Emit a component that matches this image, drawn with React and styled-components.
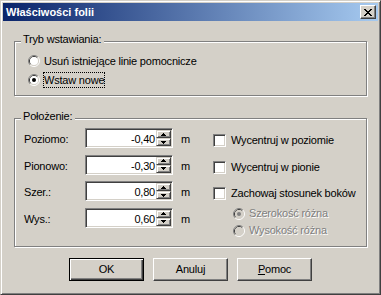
import React from 'react';
import styled, { createGlobalStyle } from 'styled-components';

const GlobalStyle = createGlobalStyle`
  html, body { margin: 0; padding: 0; background: #D4D0C8; }
  body { font-family: "Liberation Sans", Arial, sans-serif; font-size: 11px; letter-spacing: -0.2px; color: #000; }
  * { box-sizing: border-box; }
`;

const Window = styled.div`
  width: 381px;
  height: 295px;
  background: #D4D0C8;
  border: 1px solid;
  border-color: #D4D0C8 #404040 #404040 #D4D0C8;
  box-shadow: inset 1px 1px 0 #fff, inset -1px -1px 0 #808080;
  padding: 2px;
  display: flex;
  flex-direction: column;
`;

const TitleBar = styled.div`
  height: 18px;
  flex: none;
  display: flex;
  align-items: center;
  justify-content: space-between;
  padding: 0 2px 0 3px;
  background: linear-gradient(to right, #0A246A, #A6CAF0);
  color: #fff;
  font-weight: bold;
  font-size: 11px;
  letter-spacing: 0;
`;

const CloseButton = styled.div`
  width: 16px;
  height: 14px;
  display: flex;
  align-items: center;
  justify-content: center;
  background: #D4D0C8;
  border: 1px solid;
  border-color: #fff #404040 #404040 #fff;
  box-shadow: inset -1px -1px 0 #808080;
`;

const Body = styled.div`
  flex: 1;
  display: flex;
  flex-direction: column;
  padding: 20px 11px 0;
`;

const GroupBox = styled.div`
  position: relative;
  height: ${p => p.$h}px;
  margin-top: ${p => p.$mt || 0}px;
  padding: ${p => p.$pad};
  border: 1px solid #808080;
  box-shadow: 1px 1px 0 #fff, inset 1px 1px 0 #fff;
  display: flex;
  flex-direction: ${p => p.$dir || 'column'};
`;

const Legend = styled.span`
  position: absolute;
  top: -9px;
  left: 6px;
  line-height: 13px;
  padding: 0 3px 0 2px;
  background: #D4D0C8;
`;

const RadioList = styled.div`
  display: flex;
  flex-direction: column;
  gap: ${p => p.$gap}px;
  padding-left: ${p => p.$indent || 0}px;
  margin-top: ${p => p.$mt || 0}px;
`;

const OptionRow = styled.div`
  display: flex;
  align-items: center;
  height: ${p => p.$h}px;
  gap: ${p => p.$gap}px;
  white-space: nowrap;
`;

const OptionText = styled.span`
  line-height: ${p => (p.$focus ? 14 : 13)}px;
  border: ${p => (p.$focus ? '1px dotted #000' : 'none')};
  color: ${p => (p.$disabled ? '#808080' : '#000')};
  text-shadow: ${p => (p.$disabled ? '1px 1px 0 #fff' : 'none')};
`;

const CheckBox = styled.span`
  width: 13px;
  height: 13px;
  flex: none;
  background: #fff;
  border: 1px solid;
  border-color: #808080 #fff #fff #808080;
  box-shadow: inset 1px 1px 0 #404040, inset -1px -1px 0 #D4D0C8;
`;

const FieldGrid = styled.div`
  width: 189px;
  display: grid;
  grid-template-columns: 61px 88px 1fr;
  grid-auto-rows: 20px;
  row-gap: 6.5px;
  align-self: flex-start;
`;

const FieldLabel = styled.span`
  line-height: 13px;
  padding-top: 5px;
`;

const Unit = styled.span`
  line-height: 13px;
  padding-top: 5px;
  padding-left: 8px;
`;

const Field = styled.div`
  display: flex;
  height: 20px;
  background: #fff;
  border: 1px solid;
  border-color: #808080 #fff #fff #808080;
  box-shadow: inset 1px 1px 0 #404040, inset -1px -1px 0 #D4D0C8;
  padding: 1px;
`;

const FieldValue = styled.span`
  flex: 1;
  text-align: right;
  line-height: 13px;
  padding: 3px 1px 0 0;
`;

const Spinner = styled.div`
  width: 15px;
  display: flex;
  flex-direction: column;
`;

const SpinButton = styled.div`
  flex: 1;
  display: flex;
  align-items: center;
  justify-content: center;
  background: #D4D0C8;
  border: 1px solid;
  border-color: #D4D0C8 #404040 #404040 #D4D0C8;
  box-shadow: inset 1px 1px 0 #fff, inset -1px -1px 0 #808080;
`;

const RightColumn = styled.div`
  display: flex;
  flex-direction: column;
  padding-top: 6px;
`;

const CheckList = styled.div`
  display: flex;
  flex-direction: column;
  gap: 13.5px;
`;

const ButtonRow = styled.div`
  display: flex;
  justify-content: center;
  gap: 9px;
  margin-top: 11px;
`;

const PushButton = styled.div`
  width: 75px;
  height: 23px;
  display: flex;
  align-items: center;
  justify-content: center;
  background: #D4D0C8;
  border: 1px solid;
  border-color: ${p => (p.$default ? '#000' : '#fff #404040 #404040 #fff')};
  box-shadow: ${p =>
    p.$default
      ? 'inset 1px 1px 0 #fff, inset -1px -1px 0 #404040, inset -2px -2px 0 #808080'
      : 'inset -1px -1px 0 #808080'};
  line-height: 13px;
`;

const CloseIcon = () => (
  <svg width="8" height="7" viewBox="0 0 8 7" shapeRendering="crispEdges">
    <rect x="0" y="0" width="2" height="1" />
    <rect x="6" y="0" width="2" height="1" />
    <rect x="1" y="1" width="2" height="1" />
    <rect x="5" y="1" width="2" height="1" />
    <rect x="2" y="2" width="4" height="1" />
    <rect x="3" y="3" width="2" height="1" />
    <rect x="2" y="4" width="4" height="1" />
    <rect x="1" y="5" width="2" height="1" />
    <rect x="5" y="5" width="2" height="1" />
    <rect x="0" y="6" width="2" height="1" />
    <rect x="6" y="6" width="2" height="1" />
  </svg>
);

const RadioIcon = ({ checked, disabled }) => (
  <svg width="12" height="12" viewBox="0 0 12 12" style={{ flex: 'none' }}>
    <path d="M2.11 9.89 A5.5 5.5 0 0 1 9.89 2.11" stroke="#808080" fill="none" />
    <path d="M9.89 2.11 A5.5 5.5 0 0 1 2.11 9.89" stroke="#fff" fill="none" />
    <path d="M2.82 9.18 A4.5 4.5 0 0 1 9.18 2.82" stroke="#404040" fill="none" />
    <path d="M9.18 2.82 A4.5 4.5 0 0 1 2.82 9.18" stroke="#D4D0C8" fill="none" />
    <circle cx="6" cy="6" r="4" fill={disabled ? '#D4D0C8' : '#fff'} />
    {checked && <circle cx="6" cy="6" r="2" fill={disabled ? '#808080' : '#000'} />}
  </svg>
);

const Arrow = ({ down }) => (
  <svg width="5" height="3" viewBox="0 0 5 3" shapeRendering="crispEdges">
    {down ? (
      <>
        <rect x="0" y="0" width="5" height="1" />
        <rect x="1" y="1" width="3" height="1" />
        <rect x="2" y="2" width="1" height="1" />
      </>
    ) : (
      <>
        <rect x="2" y="0" width="1" height="1" />
        <rect x="1" y="1" width="3" height="1" />
        <rect x="0" y="2" width="5" height="1" />
      </>
    )}
  </svg>
);

const fields = [
  { label: 'Poziomo:', value: '-0,40' },
  { label: 'Pionowo:', value: '-0,30' },
  { label: 'Szer.:', value: '0,80' },
  { label: 'Wys.:', value: '0,60' },
];

const checks = ['Wycentruj w poziomie', 'Wycentruj w pionie', 'Zachowaj stosunek boków'];

export default function App() {
  return (
    <>
      <GlobalStyle />
      <Window>
        <TitleBar>
          <span>Właściwości folii</span>
          <CloseButton>
            <CloseIcon />
          </CloseButton>
        </TitleBar>
        <Body>
          <GroupBox $h={55} $pad="11px 0 0 13px">
            <Legend>Tryb wstawiania:</Legend>
            <RadioList $gap={3}>
              <OptionRow $h={16} $gap={4}>
                <RadioIcon />
                <OptionText>Usuń istniejące linie pomocnicze</OptionText>
              </OptionRow>
              <OptionRow $h={16} $gap={3}>
                <RadioIcon checked />
                <OptionText $focus>Wstaw nowe</OptionText>
              </OptionRow>
            </RadioList>
          </GroupBox>

          <GroupBox $h={129} $mt={22} $pad="9px 0 0 9px" $dir="row">
            <Legend>Położenie:</Legend>
            <FieldGrid>
              {fields.map(f => (
                <React.Fragment key={f.label}>
                  <FieldLabel>{f.label}</FieldLabel>
                  <Field>
                    <FieldValue>{f.value}</FieldValue>
                    <Spinner>
                      <SpinButton><Arrow /></SpinButton>
                      <SpinButton><Arrow down /></SpinButton>
                    </Spinner>
                  </Field>
                  <Unit>m</Unit>
                </React.Fragment>
              ))}
            </FieldGrid>
            <RightColumn>
              <CheckList>
                {checks.map(c => (
                  <OptionRow key={c} $h={13} $gap={5}>
                    <CheckBox />
                    <OptionText>{c}</OptionText>
                  </OptionRow>
                ))}
              </CheckList>
              <RadioList $gap={5} $indent={20} $mt={7.5}>
                <OptionRow $h={12} $gap={4}>
                  <RadioIcon checked disabled />
                  <OptionText $disabled>Szerokość różna</OptionText>
                </OptionRow>
                <OptionRow $h={12} $gap={4}>
                  <RadioIcon disabled />
                  <OptionText $disabled>Wysokość różna</OptionText>
                </OptionRow>
              </RadioList>
            </RightColumn>
          </GroupBox>

          <ButtonRow>
            <PushButton $default>OK</PushButton>
            <PushButton>Anuluj</PushButton>
            <PushButton><span><u>P</u>omoc</span></PushButton>
          </ButtonRow>
        </Body>
      </Window>
    </>
  );
}
